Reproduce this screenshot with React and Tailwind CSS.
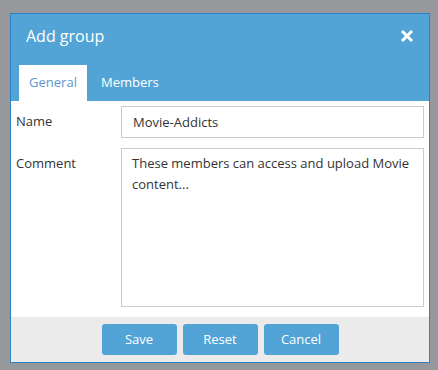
import React, { useState } from "react";

const font = { fontFamily: '"Open Sans", "Liberation Sans", sans-serif' };

const App = () => {
  const [tab, setTab] = useState("general");
  const [name, setName] = useState("Movie-Addicts");
  const [comment, setComment] = useState(
    "These members can access and upload Movie content..."
  );

  return (
    <div
      className="w-[438px] h-[370px] bg-[#97989c] pt-[13px] pl-[10px]"
      style={font}
    >
      <div className="w-[420px] h-[350px] border border-[#2f80c2] bg-white flex flex-col">
        {/* header */}
        <div className="bg-[#52a4d7] h-[87px] flex flex-col">
          <div className="h-[51px] flex items-start justify-between pl-[15px] pr-[16px] pt-[10px]">
            <span className="text-[16px] leading-[24px] text-white">Add group</span>
            <button className="mt-[6px]">
              <svg width="12" height="12" viewBox="0 0 12 12">
                <path
                  d="M2 2 L10 10 M10 2 L2 10"
                  stroke="white"
                  strokeWidth="3"
                  strokeLinecap="square"
                />
              </svg>
            </button>
          </div>
          <div className="flex h-[36px] pl-[8px]">
            <button
              onClick={() => setTab("general")}
              className={
                tab === "general"
                  ? "w-[68px] bg-white text-[13px] text-[#5c97d0]"
                  : "w-[68px] text-[13px] text-white"
              }
            >
              General
            </button>
            <button
              onClick={() => setTab("members")}
              className={
                tab === "members"
                  ? "px-[14px] bg-white text-[13px] text-[#5c97d0]"
                  : "px-[14px] text-[13px] text-white"
              }
            >
              Members
            </button>
          </div>
        </div>

        {/* body */}
        <div className="h-[216px] px-[5px] pt-[5px] flex flex-col gap-[10px]">
          <div className="flex items-center">
            <label className="w-[105px] text-[13px] text-[#333]">Name</label>
            <input
              value={name}
              onChange={(e) => setName(e.target.value)}
              className="flex-1 h-[32px] border border-[#cccccc] px-[11px] text-[13px] text-[#333] outline-none"
            />
          </div>
          <div className="flex items-start">
            <label className="w-[105px] text-[13px] leading-[21px] text-[#333] pt-[5px]">
              Comment
            </label>
            <textarea
              value={comment}
              onChange={(e) => setComment(e.target.value)}
              className="flex-1 h-[159px] border border-[#cccccc] px-[10px] pt-[4px] text-[13px] leading-[21px] text-[#333] outline-none resize-none"
            />
          </div>
        </div>

        {/* footer */}
        <div className="flex-1 bg-[#ebebeb] flex justify-center items-start pt-[7px] gap-[6px]">
          <button className="w-[75px] h-[31px] rounded-[3px] bg-[#52a4d7] text-white text-[13px]">
            Save
          </button>
          <button className="w-[75px] h-[31px] rounded-[3px] bg-[#52a4d7] text-white text-[13px]">
            Reset
          </button>
          <button className="w-[75px] h-[31px] rounded-[3px] bg-[#52a4d7] text-white text-[13px]">
            Cancel
          </button>
        </div>
      </div>
    </div>
  );
};

export default App;
